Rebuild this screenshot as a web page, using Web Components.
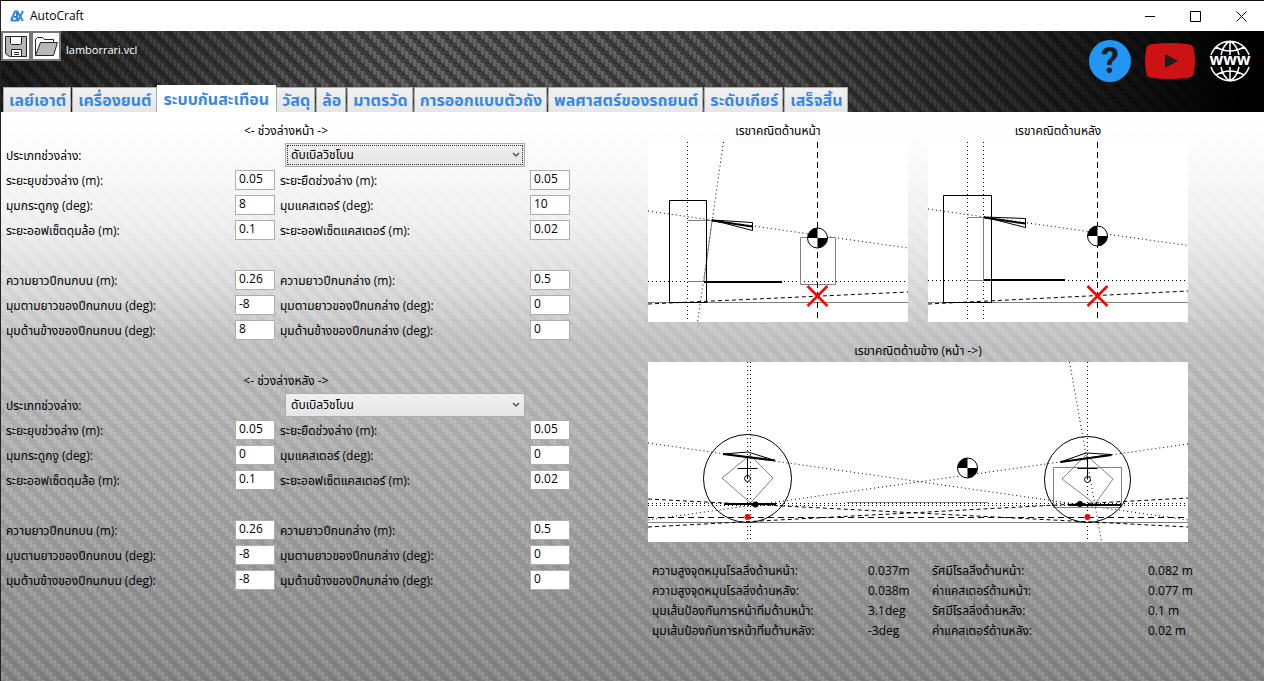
<!DOCTYPE html>
<html lang="th">
<head>
<meta charset="utf-8">
<title>AutoCraft</title>
<style>
  html, body { margin: 0; min-height: 100%; }
  body {
    font: 12px/16px "Open Sans", "Noto Sans", "Noto Sans Thai", sans-serif;
    color: #000;
    background: #828282;
  }
</style>
</head>
<body>
<auto-craft></auto-craft>

<script>
const define = (name, html, setup) => {
  const template = document.createElement('template');
  template.innerHTML = html;
  customElements.define(name, class extends HTMLElement {
    connectedCallback() {
      if (this.shadowRoot) return;
      const root = this.attachShadow({ mode: 'open' });
      root.append(template.content.cloneNode(true));
      if (setup) setup(this, root);
    }
  });
};

/* carbon-fibre twill: upright threads stepping down to the right */
const weave = (light, mid, dark) => {
  let s = '';
  for (let c = 0; c < 4; c++) {
    for (const o of [-16, 0, 16]) {
      const y = c * 4 + o, x = c * 4;
      s += `<rect x='${x}' y='${y}' width='3' height='7' fill='${light}'/>`;
      s += `<rect x='${x + 3}' y='${y}' width='1' height='7' fill='${mid}'/>`;
      s += `<rect x='${x}' y='${y + 7}' width='4' height='1' fill='${mid}'/>`;
      s += `<rect x='${x}' y='${y + 10}' width='4' height='3' fill='${dark}'/>`;
    }
  }
  const svg = `<svg xmlns='http://www.w3.org/2000/svg' width='16' height='16'>${s}</svg>`;
  return `url("data:image/svg+xml,${encodeURIComponent(svg)}")`;
};

/* ---------- title bar ---------- */
define('title-bar', `
<style>
  :host { display: flex; align-items: center; height: 30px; border-top: 1px solid #111; background: #fff; padding-left: 9px; }
  .logo { width: 14px; height: 12px; margin-right: 6px; }
  h1 { font: inherit; margin: 0; flex: 1; }
  button { width: 46px; height: 30px; border: 0; padding: 0; background: none; display: grid; place-items: center; }
</style>
<svg class="logo" viewBox="0 0 14 12" fill="none" stroke="#2f86d8" stroke-width="2"><path d="M1 10.500 5 1.500H7V10.500H1"/><path d="M4 7H7M7 1 13 11M13 1 8 11"/></svg>
<h1><slot></slot></h1>
<button aria-label="ย่อ"><svg width="11" height="11" stroke="#000"><path d="M1 5.500H11"/></svg></button>
<button aria-label="ขยาย"><svg width="11" height="11" stroke="#000" fill="none"><path d="M.5.500H10.500V10.500H.5z"/></svg></button>
<button aria-label="ปิด"><svg width="11" height="11" stroke="#000"><path d="M.5.500 10.500 10.500M10.500.500.5 10.500"/></svg></button>
`);

/* ---------- file toolbar ---------- */
define('file-toolbar', `
<style>
  :host { display: flex; color: #fff; }
  button { width: 30px; height: 30px; box-sizing: border-box; border: 2px solid #777; background: #fff; padding: 0; display: grid; place-items: center; }
  span { padding: 10px 0 0 5px; font-size: 11px; line-height: 18px; }
</style>
<button aria-label="บันทึก"><svg width="24" height="24" fill="none" stroke="#222">
  <path d="M1.500 2.500H22.500V22.500H5.500L1.500 19.500z" fill="#b4b4b4"/><path d="M6.500 2.500H17.500V9.500L15.500 10.500H7.500L6.500 9.500z" fill="#fff"/><path d="M7.500 22.500V15.500H17.500V22.500z" fill="#fff"/><path d="M10 18.500H15M10 20.500H15"/></svg></button>
<button aria-label="เปิด"><svg width="24" height="24" fill="none" stroke="#222">
  <path d="M1.500 21V5.500L3.500 3.500H8.500L10.500 5.500H19.500V8" fill="#fff"/><path d="M1.500 21.500 6.500 8.500H23.500L19.500 21.500z" fill="#b9b9b9"/></svg></button>
<span><slot></slot></span>
`);

/* ---------- tabs ---------- */
define('page-tab', `
<style>
  :host { display: block; }
  :host([selected]) { margin: 0 -1px; }
  button {
    font: bold 16px/24px "Open Sans", "Noto Sans Thai", sans-serif; color: #3a87dc; white-space: nowrap;
    height: 25px; width: 100%; padding: 0 4px 0 5px; border: 1px solid #acacac; border-bottom: 0;
    background: linear-gradient(#f1f1f1, #e6e6e6); display: block;
  }
  :host([selected]) button { height: 27px; padding: 0 6px; background: #fff; border-color: #fff; }
</style>
<button role="tab"><slot></slot></button>
`, (el, root) => root.querySelector('button').setAttribute('aria-selected', el.hasAttribute('selected')));

/* ---------- outside links ---------- */
define('help-links', `
<style>
  :host { display: flex; align-items: center; }
  a { display: grid; place-items: center; text-decoration: none; color: #1d1d1d; }
  .help { width: 42px; height: 42px; border-radius: 50%; background: #2196f3; font: bold 36px/42px Roboto, sans-serif; margin-right: 14px; }
  .tube { margin-right: 14px; }
  svg { display: block; }
</style>
<a class="help" href="#help" aria-label="วิธีใช้">?</a>
<a class="tube" href="#video" aria-label="วิดีโอ"><svg width="50" height="36"><path d="M8 1Q25-1 42 1 49 1 49 8 51 18 49 28 49 35 42 35 25 37 8 35 1 35 1 28-1 18 1 8 1 1 8 1z" fill="#cc1212"/><path d="M20 11 33 18 20 25z" fill="#1d1d1d"/></svg></a>
<a href="#site" aria-label="เว็บไซต์"><svg width="42" height="44" fill="none" stroke="#fff" stroke-width="1.500">
  <path d="M2 16A20 20 0 0 1 40 16M2 28A20 20 0 0 0 40 28M21 1.500V16M21 28V42.500M12 16Q14 6 21 2 28 6 30 16M12 28Q14 38 21 42 28 38 30 28M7 8Q21 16 35 8M7 36Q21 28 35 36"/>
  <text x="21" y="26" text-anchor="middle" fill="#fff" stroke="none" font-family="Open Sans, sans-serif" font-weight="bold" font-size="16">www</text></svg></a>
`);

/* ---------- fields ---------- */
define('value-field', `
<style>
  :host { display: flex; align-items: center; min-width: 0; }
  label { flex: 1; white-space: nowrap; padding-top: 3px; }
  input { box-sizing: border-box; width: 40px; height: 20px; border: 1px solid #abadb3; padding: 0 3px 2px; font: inherit; color: #000; background: #fff; border-radius: 0; }
</style>
<label for="v"></label><input id="v" type="text">
`, (el, root) => {
  root.querySelector('label').textContent = el.getAttribute('label');
  root.querySelector('input').value = el.getAttribute('value');
});

define('type-field', `
<style>
  :host { display: grid; grid-template-columns: 269fr 290fr; gap: 5px; align-items: center; }
  label { padding-top: 3px; }
  select {
    appearance: none; height: 24px; margin: 0 45px 0 5px; box-sizing: border-box; border: 1px solid #acacac; border-radius: 0;
    padding: 0 20px 0 5px; font: inherit; color: #000;
    background: url("data:image/svg+xml,%3Csvg xmlns='http://www.w3.org/2000/svg' width='8' height='6' fill='none' stroke='%23555' stroke-width='1.500'%3E%3Cpath d='M1 1 4 4 7 1'/%3E%3C/svg%3E") no-repeat right 4px center, linear-gradient(#f0f0f0, #e5e5e5);
  }
  :host([focused]) select { outline: 1px dotted #333; outline-offset: -3px; }
</style>
<label for="t">ประเภทช่วงล่าง:</label><select id="t"><option>ดับเบิลวิชโบน</option></select>
`);

define('suspension-form', `
<style>
  :host { display: grid; grid-template-columns: 269fr 290fr; column-gap: 5px; grid-auto-rows: 25px; padding-left: 6px; }
  h2 { font: inherit; margin: 0; text-align: center; align-self: center; grid-column: 1 / -1; padding: 3px 4px 0 0; }
  ::slotted(type-field), ::slotted(hr) { grid-column: 1 / -1; }
  ::slotted(hr) { visibility: hidden; margin: 0; }
</style>
<h2></h2><slot></slot>
`, (el, root) => root.querySelector('h2').textContent = el.getAttribute('heading'));

/* ---------- drawings ---------- */
define('geometry-view', `
<style>
  :host { display: block; }
  figure { margin: 0; }
  figcaption { line-height: 18px; height: 20px; text-align: center; }
  div { background: #fff; }
</style>
<figure><figcaption></figcaption><div><slot></slot></div></figure>
`, (el, root) => root.querySelector('figcaption').textContent = el.getAttribute('caption'));

const svgStyle = `
<style>
  :host { display: block; }
  svg { display: block; width: 100%; height: auto; fill: none; stroke: #000; stroke-width: 1; overflow: hidden; }
  .dot { stroke-dasharray: 1 3; }
  .dash { stroke-dasharray: 4 3; }
  .long { stroke-dasharray: 6 4; }
  .gray { stroke: #808080; }
  .thick { stroke-width: 2; }
  .cross { stroke: #f00; stroke-width: 2.500; }
  .red { fill: #f00; stroke: none; }
  .black { fill: #000; stroke: none; }
</style>`;
const mass = (x, y) => `<g transform="translate(${x} ${y})"><circle r="10" fill="#fff"/><path class="black" d="M0 0V-10A10 10 0 0 0-10 0zM0 0V10A10 10 0 0 0 10 0z"/></g>`;
const cross = (x, y) => `<path class="cross" d="M${x - 10} ${y - 10}l20 20m0-20l-20 20"/>`;

define('front-drawing', svgStyle + `
<svg viewBox="0 0 260 180">
  <path class="dot" d="M39.500 0V180M75.500 0 49.500 180M0 69 260 106M0 139.500H260"/>
  <path class="gray" d="M0 160.500H260M39.500 78.500H64M64 79 56 139M39.500 139.500H56"/>
  <path class="dash" d="M0 162 260 150"/><path d="M21.500 58.500H58.500V160.500H21.500z"/>
  <path d="M64 78 104.500 80.500V88.500z"/><path class="thick" d="M64 78.500 104 84.500M56 140H134"/>
  <path class="gray" d="M152.500 95.500H187.500V142.500H152.500z"/>
  <path class="long" d="M169.500 0V180"/>${mass(169.5, 96)}${cross(169.5, 154)}
</svg>`);

define('rear-drawing', svgStyle + `
<svg viewBox="0 0 260 180">
  <path class="dot" d="M39.500 0V180M55.500 0V180M0 67 260 103.500M0 138.500H260"/>
  <path class="gray" d="M0 160.500H260M39.500 75.500H56M55.500 75V138M39.500 138.500H56"/>
  <path class="dash" d="M0 162 260 149"/><path d="M15.500 53.500H63.500V160.500H15.500z"/>
  <path d="M56 75 97.500 76.500V85.500z"/><path class="thick" d="M56 75.500 97 81.500M56 138H137"/>
  <path class="long" d="M169.500 0V180"/>${mass(169.5, 94)}${cross(169.5, 154)}
</svg>`);

const wheel = (x, y, r) => `<circle cx="${x}" cy="${y}" r="${r}"/><circle cx="${x}" cy="${y}" r="3"/><path d="M${x} 95V${y}M${x - 10} 106.500h20"/><circle class="red" cx="${x}" cy="155" r="3"/>`;
define('side-drawing', svgStyle + `
<svg viewBox="0 0 540 180">
  <path class="dot" d="M99.500 0V180M102.500 0V180M439.500 0V180M421.500 0 453.500 180M0 81 540 158M540 82 0 158M0 141.500H540M0 143.500H540"/>
  <path class="gray" d="M0 160.500H540M199 140.500H340M102 93 125 116 102.500 141 74 116zM438 93 465 117 447 142 414 117zM405.500 105.500H473.500V145.500H405.500z"/>
  <path class="dash" d="M0 137 540 165M0 165 540 136"/><path class="long" d="M0 155.500H540"/>
  <path d="M75 92 100 90 127 98.500zM412.500 100 438 91 463.500 92.500z"/>
  <path class="thick" d="M75 92 127 98.500M412.500 100 463.500 93M76 142H128M420 143H473"/>
  ${wheel(99.5, 116.5, 44)}${wheel(439.5, 117.5, 43)}
  <circle class="black" cx="107.500" cy="142.500" r="3"/><circle class="black" cx="432" cy="142" r="3"/>
  ${mass(319.5, 106)}
</svg>`);

/* ---------- results ---------- */
define('result-table', `
<style>
  :host { display: block; }
  table { width: 100%; border-spacing: 0; table-layout: fixed; }
  th, td { font-weight: normal; text-align: left; padding: 0; height: 20px; white-space: nowrap; }
  th { width: 216px; padding-left: 4px; }
  td:nth-child(2) { width: 60px; }
</style>
<table><tbody>
<tr><th scope="row">ความสูงจุดหมุนโรลลิ่งด้านหน้า:</th><td>0.037m</td><th scope="row">รัศมีโรลลิ่งด้านหน้า:</th><td>0.082 m</td></tr>
<tr><th scope="row">ความสูงจุดหมุนโรลลิ่งด้านหลัง:</th><td>0.038m</td><th scope="row">ค่าแคสเตอร์ด้านหน้า:</th><td>0.077 m</td></tr>
<tr><th scope="row">มุมเส้นป้องกันการหน้าทิ่มด้านหน้า:</th><td>3.1deg</td><th scope="row">รัศมีโรลลิ่งด้านหลัง:</th><td>0.1 m</td></tr>
<tr><th scope="row">มุมเส้นป้องกันการหน้าทิ่มด้านหลัง:</th><td>-3deg</td><th scope="row">ค่าแคสเตอร์ด้านหลัง:</th><td>0.02 m</td></tr>
</tbody></table>
`);

/* ---------- whole window ---------- */
define('auto-craft', `
<style>
  :host { display: flex; flex-direction: column; min-height: 100vh; box-sizing: border-box; border-left: 1px solid #222; }
  header {
    display: flex; justify-content: space-between; align-items: flex-start;
    background: linear-gradient(90deg, rgba(0,0,0,.7), rgba(0,0,0,.3) 18%, rgba(0,0,0,.05) 32%, rgba(0,0,0,.12) 55%, rgba(0,0,0,.5) 76%, #000 98%), ${weave('#6a6a6a', '#565656', '#3a3a3a')} #444;
  }
  .start { display: flex; flex-direction: column; justify-content: space-between; height: 81px; }
  nav { display: flex; align-items: flex-end; gap: 1px; padding-left: 2px; }
  help-links { padding: 8px 13px 0 0; }
  main {
    flex: 1; display: grid; grid-template-columns: minmax(0, 647fr) minmax(0, 616fr); align-items: start;
    background: linear-gradient(#fff, rgba(255,255,255,0) 40%), ${weave('rgba(255,255,255,.15)', 'rgba(255,255,255,.08)', 'rgba(0,0,0,.03)')}, linear-gradient(#f0f0f0, #dcdcdc 20%, #bcbcbc 42%, #7e7e7e);
  }
  .forms { max-width: 570px; padding-top: 5px; box-sizing: border-box; margin-left: -1px; }
  .views { display: grid; grid-template-columns: 1fr 1fr; gap: 20px; max-width: 540px; padding-top: 10px; margin-right: 20px; }
  .wide { grid-column: 1 / -1; }
  result-table { margin-top: -1px; }
</style>
<title-bar>AutoCraft</title-bar>
<header>
  <div class="start">
    <file-toolbar>lamborrari.vcl</file-toolbar>
    <nav role="tablist">
      <page-tab>เลย์เอาต์</page-tab><page-tab>เครื่องยนต์</page-tab><page-tab selected>ระบบกันสะเทือน</page-tab><page-tab>วัสดุ</page-tab><page-tab>ล้อ</page-tab><page-tab>มาตรวัด</page-tab><page-tab>การออกแบบตัวถัง</page-tab><page-tab>พลศาสตร์ของรถยนต์</page-tab><page-tab>ระดับเกียร์</page-tab><page-tab>เสร็จสิ้น</page-tab>
    </nav>
  </div>
  <help-links></help-links>
</header>
<main>
  <div class="forms">
    <suspension-form heading="&lt;- ช่วงล่างหน้า -&gt;">
      <type-field focused></type-field>
      <value-field label="ระยะยุบช่วงล่าง (m):" value="0.05"></value-field><value-field label="ระยะยืดช่วงล่าง (m):" value="0.05"></value-field>
      <value-field label="มุมกระดูกงู (deg):" value="8"></value-field><value-field label="มุมแคสเตอร์ (deg):" value="10"></value-field>
      <value-field label="ระยะออฟเซ็ตดุมล้อ (m):" value="0.1"></value-field><value-field label="ระยะออฟเซ็ตแคสเตอร์ (m):" value="0.02"></value-field>
      <hr>
      <value-field label="ความยาวปีกนกบน (m):" value="0.26"></value-field><value-field label="ความยาวปีกนกล่าง (m):" value="0.5"></value-field>
      <value-field label="มุมตามยาวของปีกนกบน (deg):" value="-8"></value-field><value-field label="มุมตามยาวของปีกนกล่าง (deg):" value="0"></value-field>
      <value-field label="มุมด้านข้างของปีกนกบน (deg):" value="8"></value-field><value-field label="มุมด้านข้างของปีกนกล่าง (deg):" value="0"></value-field>
      <hr>
    </suspension-form>
    <suspension-form heading="&lt;- ช่วงล่างหลัง -&gt;">
      <type-field></type-field>
      <value-field label="ระยะยุบช่วงล่าง (m):" value="0.05"></value-field><value-field label="ระยะยืดช่วงล่าง (m):" value="0.05"></value-field>
      <value-field label="มุมกระดูกงู (deg):" value="0"></value-field><value-field label="มุมแคสเตอร์ (deg):" value="0"></value-field>
      <value-field label="ระยะออฟเซ็ตดุมล้อ (m):" value="0.1"></value-field><value-field label="ระยะออฟเซ็ตแคสเตอร์ (m):" value="0.02"></value-field>
      <hr>
      <value-field label="ความยาวปีกนกบน (m):" value="0.26"></value-field><value-field label="ความยาวปีกนกล่าง (m):" value="0.5"></value-field>
      <value-field label="มุมตามยาวของปีกนกบน (deg):" value="-8"></value-field><value-field label="มุมตามยาวของปีกนกล่าง (deg):" value="0"></value-field>
      <value-field label="มุมด้านข้างของปีกนกบน (deg):" value="-8"></value-field><value-field label="มุมด้านข้างของปีกนกล่าง (deg):" value="0"></value-field>
    </suspension-form>
  </div>
  <div class="views">
    <geometry-view caption="เรขาคณิตด้านหน้า"><front-drawing></front-drawing></geometry-view>
    <geometry-view caption="เรขาคณิตด้านหลัง"><rear-drawing></rear-drawing></geometry-view>
    <geometry-view class="wide" caption="เรขาคณิตด้านข้าง (หน้า -&gt;)"><side-drawing></side-drawing></geometry-view>
    <result-table class="wide"></result-table>
  </div>
</main>
`);
</script>
</body>
</html>
